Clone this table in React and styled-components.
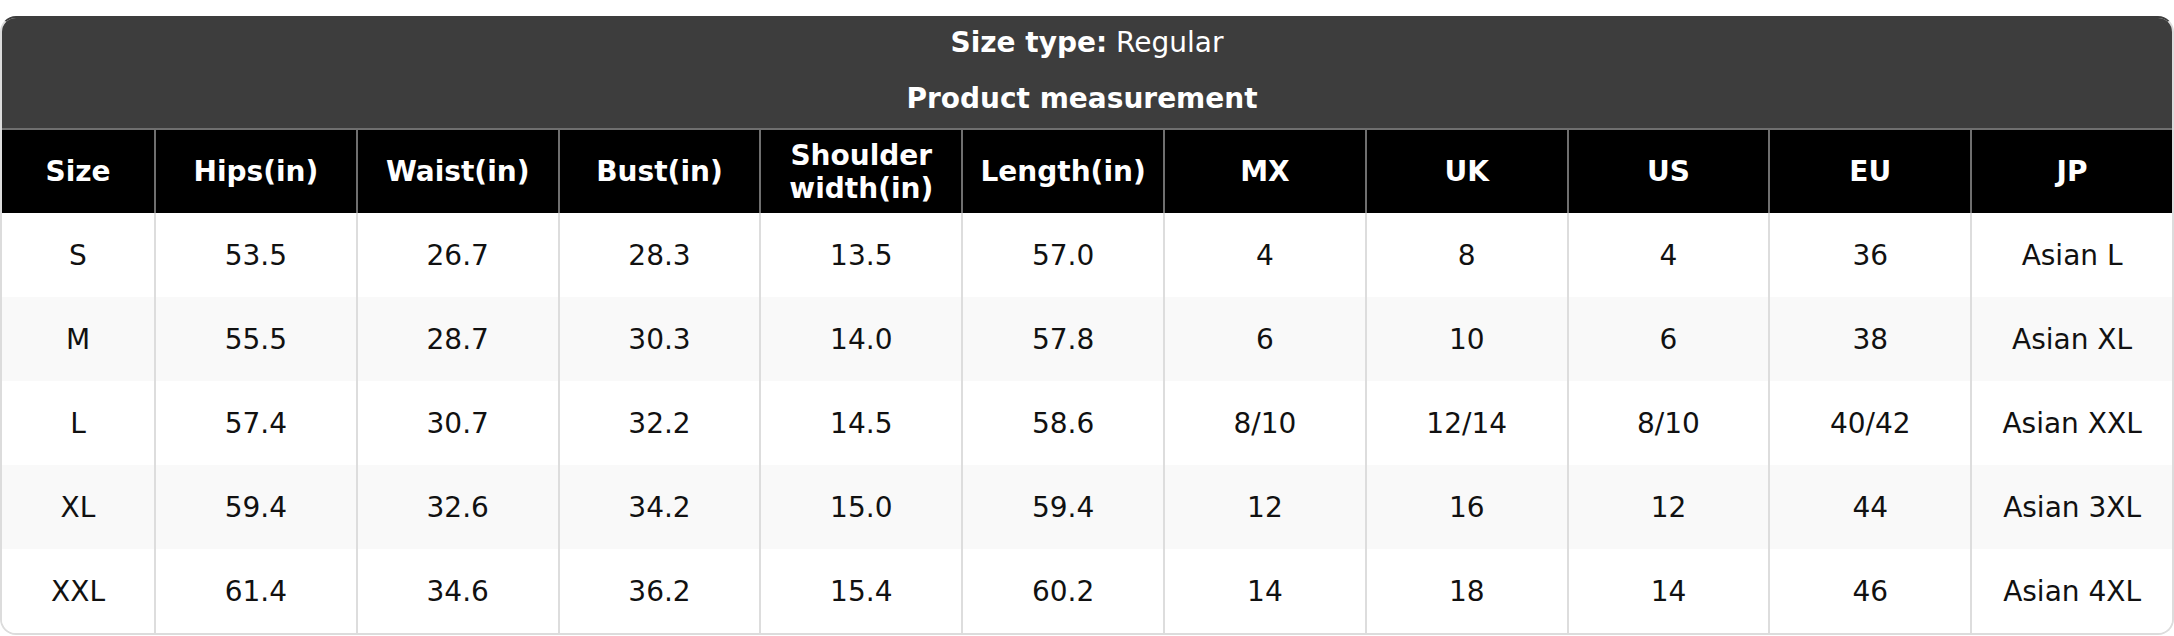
import React from "react";
import styled, { createGlobalStyle } from "styled-components";

const Global = createGlobalStyle`
  html, body { margin: 0; padding: 0; background: #ffffff; }
  body { font-family: "DejaVu Sans", Verdana, sans-serif; }
  * { box-sizing: border-box; }
`;

const Page = styled.div`
  padding-top: 16px;
  width: 2174px;
`;

const Card = styled.div`
  width: 2174px;
  border: 2px solid #dcdcdc;
  border-top-color: #3d3d3d;
  border-radius: 16px;
  overflow: hidden;
  background: #ffffff;
`;

const Title = styled.div`
  background: #3d3d3d;
  color: #ffffff;
  text-align: center;
  font-size: 28px;
  line-height: 34px;
  padding: 8px 0 12px;
  display: flex;
  flex-direction: column;
  gap: 22px;
`;

const TitleLine = styled.div`
  font-weight: ${(p) => (p.$bold ? 700 : 400)};
  padding-right: ${(p) => (p.$trail ? "10px" : "0")};
  white-space: nowrap;
`;

const Strong = styled.span`
  font-weight: 700;
`;

const Grid = styled.div`
  display: grid;
  grid-template-columns: 152px repeat(10, 1fr);
`;

const HeadCell = styled.div`
  height: 85px;
  background: #000000;
  color: #ffffff;
  font-weight: 700;
  font-size: 28px;
  line-height: 33px;
  text-align: center;
  display: flex;
  align-items: center;
  justify-content: center;
  border-top: 2px solid #6f6f6f;
  border-left: ${(p) => (p.$first ? "none" : "2px solid #6f6f6f")};
`;

const Cell = styled.div`
  height: 84px;
  background: ${(p) => (p.$alt ? "#f9f9f9" : "#ffffff")};
  color: #111111;
  font-size: 28px;
  line-height: 33px;
  text-align: center;
  display: flex;
  align-items: center;
  justify-content: center;
  white-space: nowrap;
  border-left: ${(p) => (p.$first ? "none" : "2px solid #dddddd")};
`;

const headers = [
  "Size",
  "Hips(in)",
  "Waist(in)",
  "Bust(in)",
  <>Shoulder<br />width(in)</>,
  "Length(in)",
  "MX",
  "UK",
  "US",
  "EU",
  "JP",
];

const rows = [
  ["S", "53.5", "26.7", "28.3", "13.5", "57.0", "4", "8", "4", "36", "Asian L"],
  ["M", "55.5", "28.7", "30.3", "14.0", "57.8", "6", "10", "6", "38", "Asian XL"],
  ["L", "57.4", "30.7", "32.2", "14.5", "58.6", "8/10", "12/14", "8/10", "40/42", "Asian XXL"],
  ["XL", "59.4", "32.6", "34.2", "15.0", "59.4", "12", "16", "12", "44", "Asian 3XL"],
  ["XXL", "61.4", "34.6", "36.2", "15.4", "60.2", "14", "18", "14", "46", "Asian 4XL"],
];

export default function App() {
  return (
    <Page>
      <Global />
      <Card>
        <Title>
          <TitleLine>
            <Strong>Size type:</Strong> Regular
          </TitleLine>
          <TitleLine $bold $trail>Product measurement</TitleLine>
        </Title>
        <Grid>
          {headers.map((h, i) => (
            <HeadCell key={i} $first={i === 0}>
              <span>{h}</span>
            </HeadCell>
          ))}
          {rows.map((r, ri) =>
            r.map((v, ci) => (
              <Cell key={ri + "-" + ci} $first={ci === 0} $alt={ri % 2 === 1}>
                {v}
              </Cell>
            ))
          )}
        </Grid>
      </Card>
    </Page>
  );
}
